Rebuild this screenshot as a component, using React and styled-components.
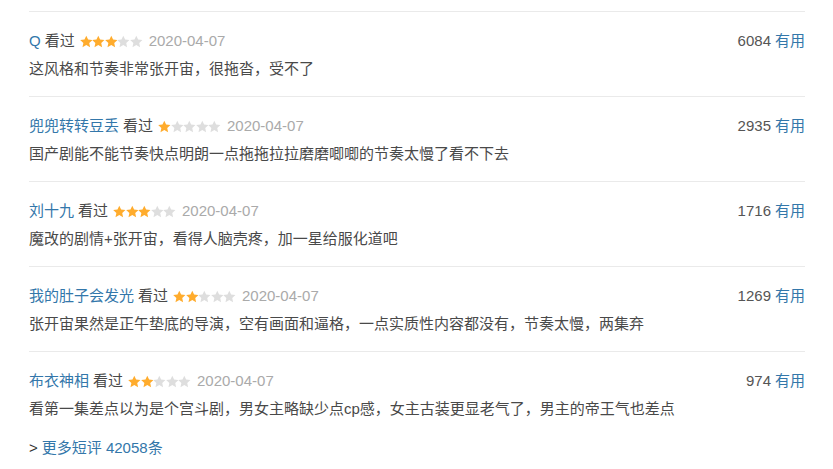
import React from "react";
import styled, { createGlobalStyle } from "styled-components";

const Global = createGlobalStyle`
  html, body { margin: 0; padding: 0; background: #fff; }
  body { font-family: "Liberation Sans", Arial, "Noto Sans CJK SC", sans-serif; }
`;

const Wrap = styled.div`
  width: 776px;
  padding: 11px 0 0 29px;
  font-size: 15px;
  line-height: 20px;
  color: #494949;
`;

const Item = styled.div`
  border-top: 1px solid #eaeaea;
  padding: 19px 0 17px;
`;

const Head = styled.div`
  display: flex;
  align-items: center;
  height: 20px;
`;

const Info = styled.div`
  display: flex;
  align-items: center;
  flex: 1;
  white-space: nowrap;
`;

const Name = styled.a`
  color: #3377aa;
  text-decoration: none;
`;

const Watched = styled.span`
  color: #494949;
  margin-left: 4px;
`;

const Stars = styled.span`
  display: inline-flex;
  margin-left: 5px;
`;

const DateText = styled.span`
  color: #aaa;
  margin-left: 6px;
`;

const Votes = styled.span`
  color: #555;
  white-space: nowrap;
`;

const Useful = styled.a`
  color: #3377aa;
  margin-left: 4px;
  text-decoration: none;
`;

const Body = styled.p`
  margin: 8px 0 0;
  color: #494949;
`;

const More = styled.div`
  margin-top: 2px;
  color: #333;
`;

const MoreLink = styled.a`
  color: #3377aa;
  text-decoration: none;
  margin-left: 4px;
`;

const Star = ({ on }) => (
  <svg width="12.6" height="13" viewBox="0.6 0.4 22.8 22">
    <path
      d="M12 0.8l3.3 7.1 7.8 0.9-5.8 5.3 1.6 7.7L12 17.9 5.1 21.8l1.6-7.7L0.9 8.8l7.8-0.9z"
      fill={on ? "#ffac2d" : "#dedede"}
    />
  </svg>
);

const reviews = [
  { name: "Q", stars: 3, votes: 6084, text: "这风格和节奏非常张开宙，很拖沓，受不了" },
  { name: "兜兜转转豆丢", stars: 1, votes: 2935, text: "国产剧能不能节奏快点明朗一点拖拖拉拉磨磨唧唧的节奏太慢了看不下去" },
  { name: "刘十九", stars: 3, votes: 1716, text: "魔改的剧情+张开宙，看得人脑壳疼，加一星给服化道吧" },
  { name: "我的肚子会发光", stars: 2, votes: 1269, text: "张开宙果然是正午垫底的导演，空有画面和逼格，一点实质性内容都没有，节奏太慢，两集弃" },
  { name: "布衣神相", stars: 2, votes: 974, text: "看第一集差点以为是个宫斗剧，男女主略缺少点cp感，女主古装更显老气了，男主的帝王气也差点" },
];

export default function App() {
  return (
    <>
      <Global />
      <Wrap>
        {reviews.map((r, i) => (
          <Item key={i}>
            <Head>
              <Info>
                <Name href="#">{r.name}</Name>
                <Watched>看过</Watched>
                <Stars>
                  {[0, 1, 2, 3, 4].map((s) => (
                    <Star key={s} on={s < r.stars} />
                  ))}
                </Stars>
                <DateText>2020-04-07</DateText>
              </Info>
              <Votes>
                {r.votes}
                <Useful href="#">有用</Useful>
              </Votes>
            </Head>
            <Body>{r.text}</Body>
          </Item>
        ))}
        <More>
          &gt;<MoreLink href="#">更多短评 42058条</MoreLink>
        </More>
      </Wrap>
    </>
  );
}
